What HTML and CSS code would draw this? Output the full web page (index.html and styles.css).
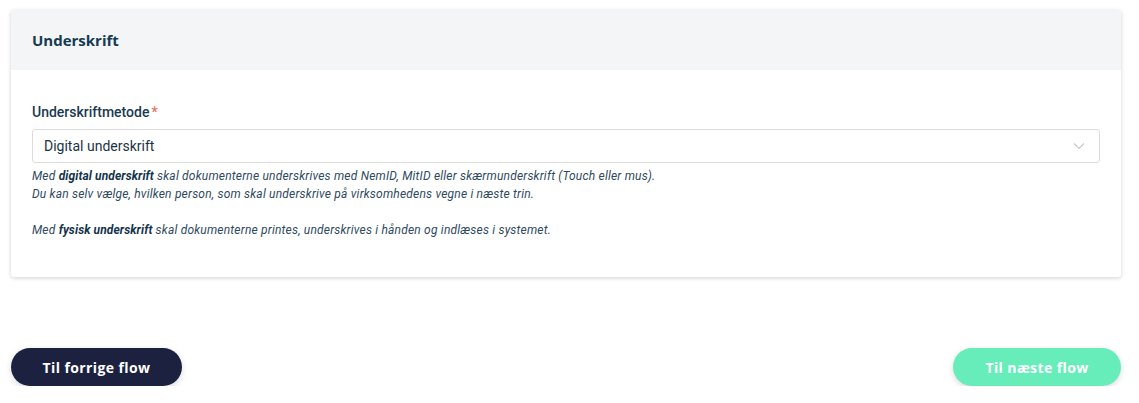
FILE: index.html
```html
<!DOCTYPE html>
<html lang="da">
<head>
    <meta charset="UTF-8">
    <meta name="viewport" content="width=device-width, initial-scale=1.0">
    <title>Underskrift</title>
    <link rel="stylesheet" href="styles.css">
</head>
<body>
    <div class="card">
        <div class="card-header">
            <h2>Underskrift</h2>
        </div>
        <div class="card-body">
            <label for="method">Underskriftmetode<span class="required">*</span></label>
            <div class="select">
                <span>Digital underskrift</span>
                <svg width="12" height="8" viewBox="0 0 12 8"><path d="M1 1.5l5 5 5-5" fill="none" stroke="#c8c8c8" stroke-width="1.2"/></svg>
            </div>
            <div class="help">
                <p>Med <b>digital underskrift</b> skal dokumenterne underskrives med NemID, MitID eller skærmunderskrift (Touch eller mus).<br>
                Du kan selv vælge, hvilken person, som skal underskrive på virksomhedens vegne i næste trin.</p>
                <p>Med <b>fysisk underskrift</b> skal dokumenterne printes, underskrives i hånden og indlæses i systemet.</p>
            </div>
        </div>
    </div>

    <div class="actions">
        <button class="btn btn-prev">Til forrige flow</button>
        <button class="btn btn-next">Til næste flow</button>
    </div>
</body>
</html>
```

FILE: styles.css
```css
/* Styles */
body {
    font-family: 'Roboto', sans-serif;
    margin: 0;
    padding: 10px 18px 0 11px;
    background-color: #ffffff;
    color: #1a3a52;
}
.card {
    background-color: #ffffff;
    border-radius: 3px;
    box-shadow: 0 1px 4px rgba(0,0,0,0.18);
    overflow: hidden;
}
.card-header {
    background-color: #f4f5f7;
    height: 60px;
    padding: 0 21px;
    display: flex;
    align-items: center;
}
.card-header h2 {
    font-family: 'Open Sans', sans-serif;
    font-size: 15px;
    font-weight: 700;
    margin: 0 0 1px;
    color: #163a52;
}
.card-body {
    padding: 34px 21px 38px;
}
label {
    display: block;
    font-size: 14px;
    font-weight: 500;
    margin-bottom: 9px;
    color: #1a3a52;
}
.required {
    color: #f0705a;
    margin-left: 2px;
}
.select {
    height: 34px;
    box-sizing: border-box;
    border: 1px solid #dcdcdc;
    border-radius: 3px;
    padding: 0 14px 0 11px;
    display: flex;
    align-items: center;
    justify-content: space-between;
    font-size: 14px;
    color: #1c3346;
}
.help {
    font-size: 12px;
    letter-spacing: 0.2px;
    font-style: italic;
    line-height: 18px;
    margin-top: 4px;
    color: #2e4a60;
}
.help p {
    margin: 0 0 18px;
}
.help p:last-child {
    margin-bottom: 0;
}
.help b {
    font-weight: 700;
    letter-spacing: 0.1px;
    color: #15344c;
}
.actions {
    display: flex;
    justify-content: space-between;
    margin-top: 71px;
}
.btn {
    font-family: 'Open Sans', sans-serif;
    font-size: 14px;
    letter-spacing: 0.4px;
    font-weight: 700;
    color: #ffffff;
    border: none;
    height: 38px;
    border-radius: 19px;
    cursor: pointer;
    box-shadow: 0 2px 6px rgba(0,0,0,0.15);
}
.btn-prev {
    background-color: #1c2140;
    width: 171px;
}
.btn-next {
    background-color: #66edb9;
    width: 168px;
}
```
